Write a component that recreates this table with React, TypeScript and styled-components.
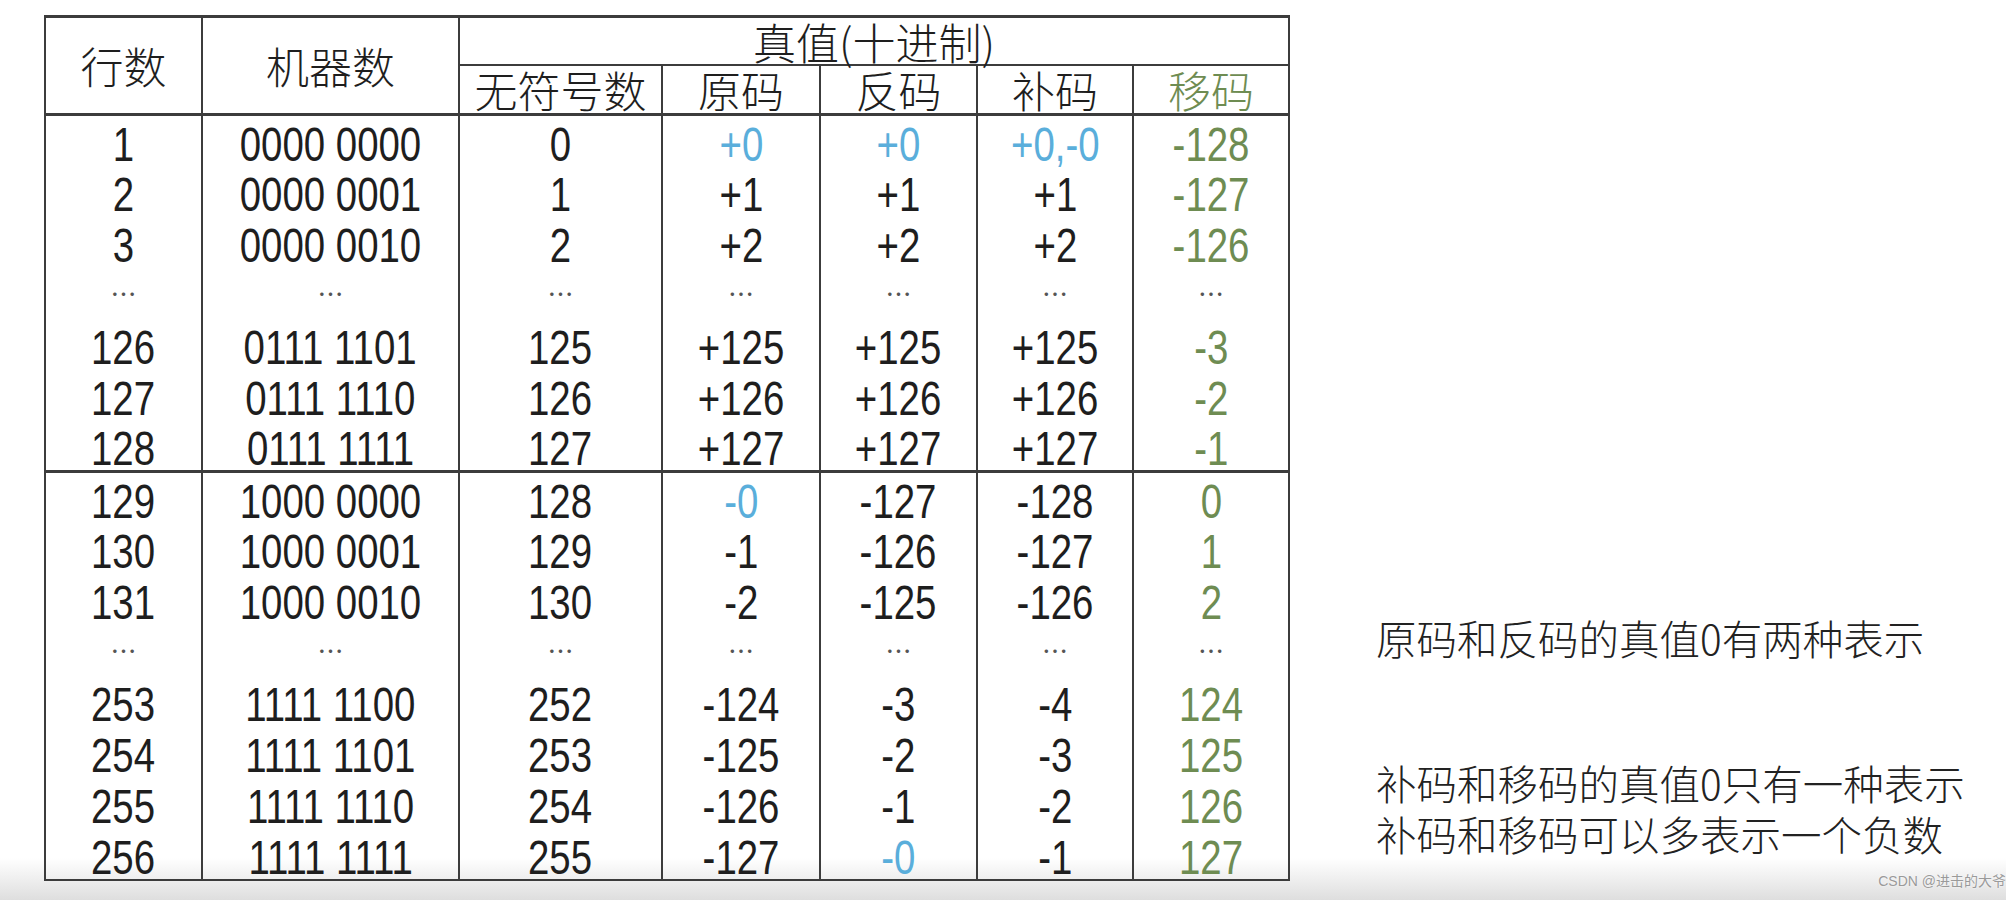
import React from 'react';
import styled, { createGlobalStyle } from 'styled-components';

// Estilos globais da página
const GlobalStyle = createGlobalStyle`
  html, body {
    margin: 0;
    padding: 0;
  }
  body {
    width: 2006px;
    height: 900px;
    overflow: hidden;
    background: linear-gradient(to bottom, #ffffff 0, #ffffff 858px, #eeeeee 880px, #dedede 900px);
    font-family: "Liberation Sans", "Noto Sans CJK SC", sans-serif;
    color: #1e1e1e;
  }
`;

const colors = {
    border: '#3c3c3c',
    blue: '#5aaedb',
    green: '#6e8c52',
    text: '#1e1e1e',
};

type Tone = 'plain' | 'blue' | 'green';

// Container da página
const Page = styled.div`
  position: relative;
  display: flex;
  align-items: flex-start;
  gap: 86px;
  padding: 15px 0 0 44px;
  width: 2006px;
  height: 900px;
  box-sizing: border-box;
`;

// Tabela principal
const Table = styled.table`
  border-collapse: collapse;
  table-layout: fixed;
  border: 2px solid ${colors.border};
  border-top-width: 3px;
`;

const HeadCell = styled.th<{ $tone?: Tone; $h?: number; $thickBottom?: boolean }>`
  height: ${p => (p.$h ? `${p.$h}px` : 'auto')};
  padding: 0;
  border-left: 2px solid ${colors.border};
  border-right: 2px solid ${colors.border};
  border-bottom: ${p => (p.$thickBottom ? 3 : 2)}px solid ${colors.border};
  font-family: "Noto Sans CJK SC", sans-serif;
  font-weight: 300;
  font-size: 43px;
  line-height: 1;
  text-align: center;
  vertical-align: middle;
  color: ${p => (p.$tone === 'green' ? colors.green : colors.text)};
`;

const Row = styled.tr<{ $divider?: boolean }>`
  height: 51px;
  border-bottom: ${p => (p.$divider ? `3px solid ${colors.border}` : 'none')};
`;

const Cell = styled.td<{ $tone?: Tone }>`
  padding: 0;
  border-left: 2px solid ${colors.border};
  border-right: 2px solid ${colors.border};
  line-height: 1;
  text-align: center;
  vertical-align: middle;
  color: ${p => (p.$tone === 'blue' ? colors.blue : p.$tone === 'green' ? colors.green : colors.text)};
`;

// Números estreitos (fonte condensada)
const Num = styled.span`
  display: inline-block;
  font-family: "Liberation Sans", sans-serif;
  font-size: 48px;
  white-space: pre;
  transform: translateY(4px) scaleX(0.8);
`;

const Dots = styled.span`
  display: inline-block;
  font-family: "Noto Sans CJK SC", sans-serif;
  font-size: 26px;
  color: #555;
  transform: translateY(0);
`;

// Observações à direita
const Notes = styled.div`
  display: flex;
  flex-direction: column;
  padding-top: 597px;
  font-family: "Noto Sans CJK SC", sans-serif;
  font-weight: 300;
  font-size: 40.5px;
  line-height: 51px;
  color: #222;
`;

const Note = styled.div<{ $gap?: number }>`
  margin-top: ${p => p.$gap ?? 0}px;
  white-space: nowrap;
`;

const Watermark = styled.div`
  position: absolute;
  right: 0;
  bottom: 10px;
  font-family: "Liberation Sans", "Noto Sans CJK SC", sans-serif;
  font-size: 14px;
  color: #9a9a9a;
  text-shadow: 0 0 2px #fff;
`;

type Value = string | { v: string; tone: Tone };

const b = (v: string): Value => ({ v, tone: 'blue' });

const rows: (Value[] | null)[] = [
    ['1', '0000 0000', '0', b('+0'), b('+0'), b('+0,-0'), '-128'],
    ['2', '0000 0001', '1', '+1', '+1', '+1', '-127'],
    ['3', '0000 0010', '2', '+2', '+2', '+2', '-126'],
    null,
    ['126', '0111 1101', '125', '+125', '+125', '+125', '-3'],
    ['127', '0111 1110', '126', '+126', '+126', '+126', '-2'],
    ['128', '0111 1111', '127', '+127', '+127', '+127', '-1'],
    ['129', '1000 0000', '128', b('-0'), '-127', '-128', '0'],
    ['130', '1000 0001', '129', '-1', '-126', '-127', '1'],
    ['131', '1000 0010', '130', '-2', '-125', '-126', '2'],
    null,
    ['253', '1111 1100', '252', '-124', '-3', '-4', '124'],
    ['254', '1111 1101', '253', '-125', '-2', '-3', '125'],
    ['255', '1111 1110', '254', '-126', '-1', '-2', '126'],
    ['256', '1111 1111', '255', '-127', b('-0'), '-1', '127'],
];

const widths = [157, 257, 203, 158, 157, 156, 156];

const renderCell = (val: Value, i: number) => {
    const isGreen = i === 6;
    if (typeof val === 'string') {
        return <Cell key={i} $tone={isGreen ? 'green' : 'plain'}><Num>{val}</Num></Cell>;
    }
    return <Cell key={i} $tone={val.tone}><Num>{val.v}</Num></Cell>;
};

export default function App() {
    return (
        <>
            <GlobalStyle />
            <Page>
                <Table>
                    <colgroup>
                        {widths.map((w, i) => <col key={i} style={{ width: w }} />)}
                    </colgroup>
                    <thead>
                        <tr>
                            <HeadCell rowSpan={2} $thickBottom>行数</HeadCell>
                            <HeadCell rowSpan={2} $thickBottom>机器数</HeadCell>
                            <HeadCell colSpan={5} $h={46}>真值(十进制)</HeadCell>
                        </tr>
                        <tr>
                            <HeadCell $h={47} $thickBottom>无符号数</HeadCell>
                            <HeadCell $thickBottom>原码</HeadCell>
                            <HeadCell $thickBottom>反码</HeadCell>
                            <HeadCell $thickBottom>补码</HeadCell>
                            <HeadCell $thickBottom $tone="green">移码</HeadCell>
                        </tr>
                    </thead>
                    <tbody>
                        {rows.map((r, idx) =>
                            r ? (
                                <Row key={idx} $divider={idx === 6}>
                                    {r.map(renderCell)}
                                </Row>
                            ) : (
                                <Row key={idx}>
                                    {widths.map((_, i) => (
                                        <Cell key={i}><Dots>…</Dots></Cell>
                                    ))}
                                </Row>
                            )
                        )}
                    </tbody>
                </Table>

                <Notes>
                    <Note>原码和反码的真值0有两种表示</Note>
                    <Note $gap={94}>补码和移码的真值0只有一种表示</Note>
                    <Note>补码和移码可以多表示一个负数</Note>
                </Notes>

                <Watermark>CSDN @进击的大爷</Watermark>
            </Page>
        </>
    );
}
